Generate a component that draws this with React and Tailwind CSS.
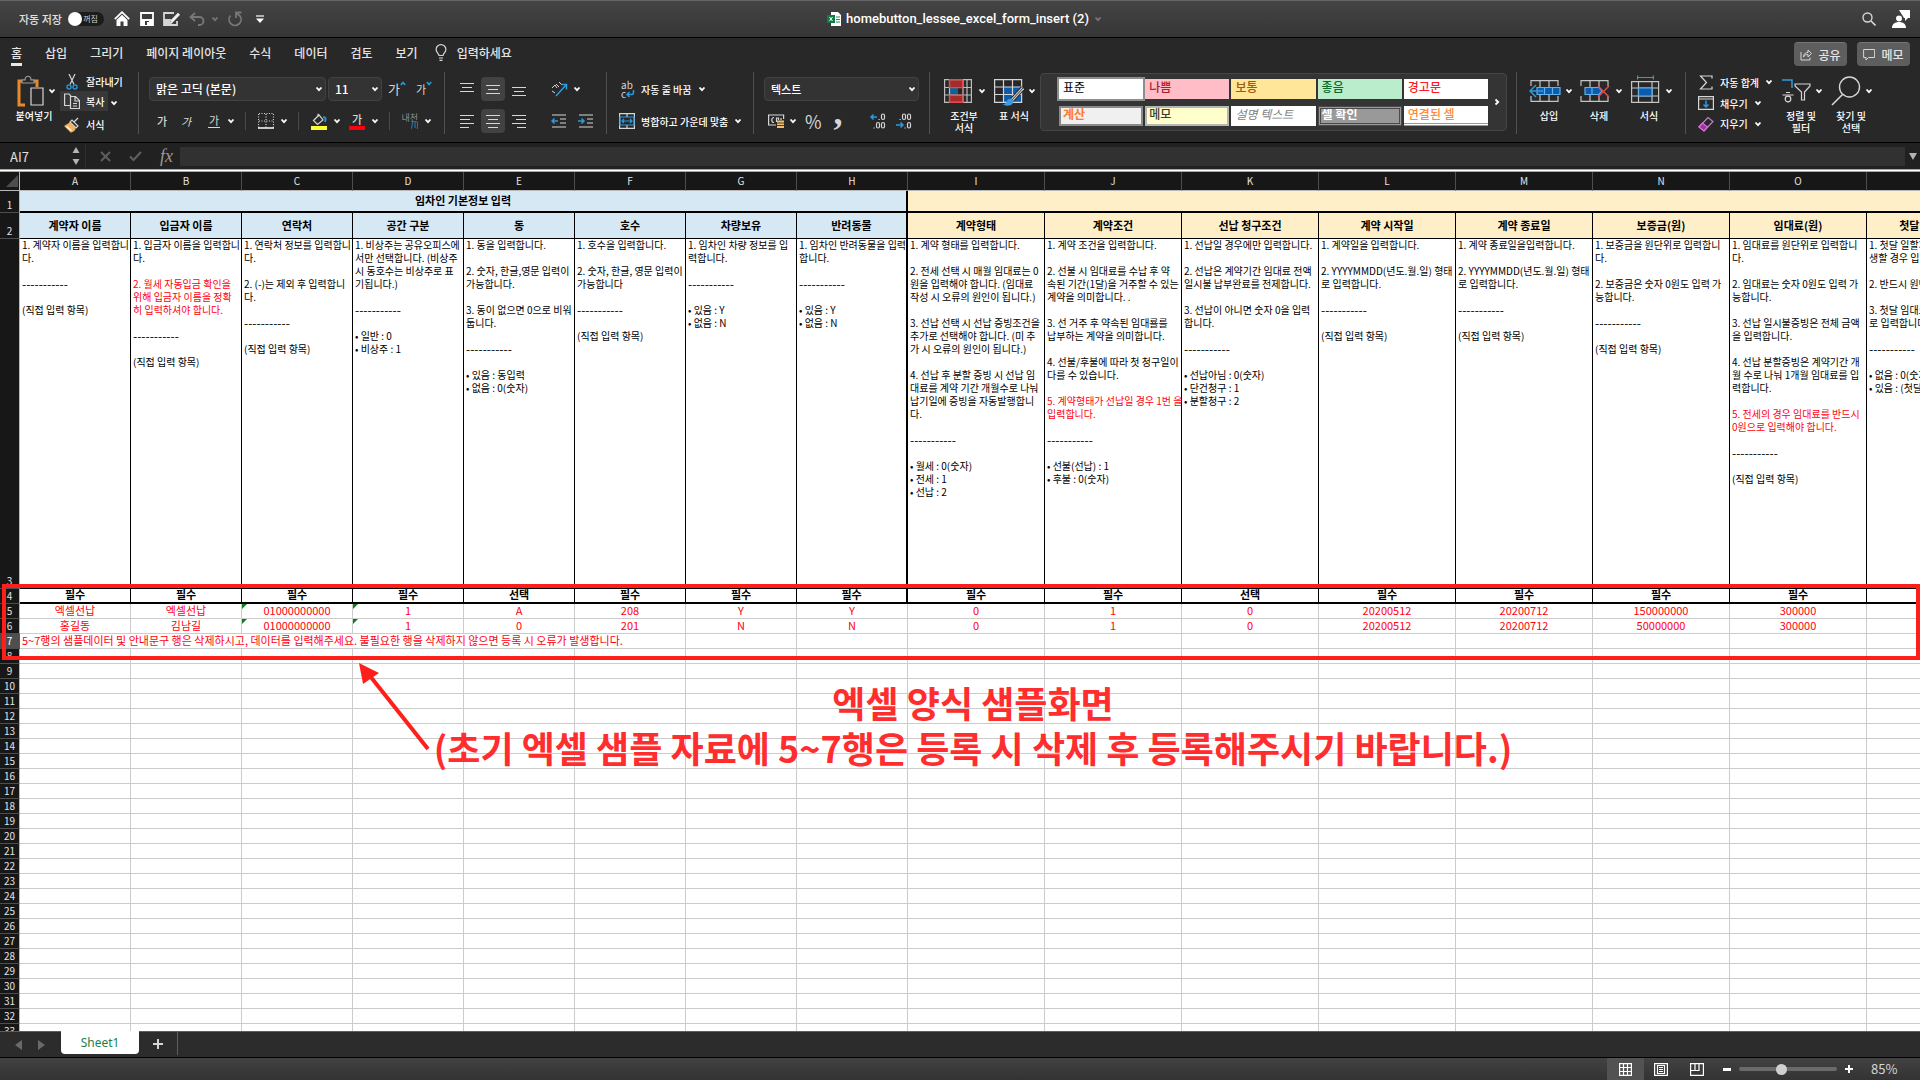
import React from "react";

const COLUMNS = [
  { id: "A", title: "계약자 이름", need: "필수", rows: ["엑셀선납", "홍길동"] },
  { id: "B", title: "입금자 이름", need: "필수", rows: ["엑셀선납", "김남길"] },
  { id: "C", title: "연락처", need: "필수", rows: ["01000000000", "01000000000"], flagged: true },
  { id: "D", title: "공간 구분", need: "필수", rows: ["1", "1"], flagged: true },
  { id: "E", title: "동", need: "선택", rows: ["A", "0"] },
  { id: "F", title: "호수", need: "필수", rows: ["208", "201"] },
  { id: "G", title: "차량보유", need: "필수", rows: ["Y", "N"] },
  { id: "H", title: "반려동물", need: "필수", rows: ["Y", "N"] },
  { id: "I", title: "계약형태", need: "필수", rows: ["0", "0"] },
  { id: "J", title: "계약조건", need: "필수", rows: ["1", "1"] },
  { id: "K", title: "선납 청구조건", need: "선택", rows: ["0", "0"] },
  { id: "L", title: "계약 시작일", need: "필수", rows: ["20200512", "20200512"] },
  { id: "M", title: "계약 종료일", need: "필수", rows: ["20200712", "20200712"] },
  { id: "N", title: "보증금(원)", need: "필수", rows: ["150000000", "50000000"] },
  { id: "O", title: "임대료(원)", need: "필수", rows: ["300000", "300000"] },
  { id: "P", title: "첫달 임대료(원)", need: "", rows: ["", ""] },
];

const DASH = "-----------";
const DIRECT = "(직접 입력 항목)";

// a leading "!" marks a red line
const GUIDES = {
  A: ["1. 계약자 이름을 입력합니", "다.", "", DASH, "", DIRECT],
  B: ["1. 입금자 이름을 입력합니", "다.", "", "!2. 월세 자동입금 확인을", "!위해 입금자 이름을 정확", "!히 입력하셔야 합니다.", "", DASH, "", DIRECT],
  C: ["1. 연락처 정보를 입력합니", "다.", "", "2. (-)는 제외 후 입력합니", "다.", "", DASH, "", DIRECT],
  D: ["1. 비상주는 공유오피스에", "서만 선택합니다. (비상주", "시 동호수는 비상주로 표", "기됩니다.)", "", DASH, "", "• 일반 : 0", "• 비상주 : 1"],
  E: ["1. 동을 입력합니다.", "", "2. 숫자, 한글,영문 입력이", "가능합니다.", "", "3. 동이 없으면 0으로 비워", "둡니다.", "", DASH, "", "• 있음 : 동입력", "• 없음 : 0(숫자)"],
  F: ["1. 호수을 입력합니다.", "", "2. 숫자, 한글, 영문 입력이", "가능합니다", "", DASH, "", DIRECT],
  G: ["1. 임차인 차량 정보를 입", "력합니다.", "", DASH, "", "• 있음 : Y", "• 없음 : N"],
  H: ["1. 임차인 반려동물을 입력", "합니다.", "", DASH, "", "• 있음 : Y", "• 없음 : N"],
  I: ["1. 계약 형태를 입력합니다.", "", "2. 전세 선택 시 매월 임대료는 0", "원을 입력해야 합니다. (임대료", "작성 시 오류의 원인이 됩니다.)", "", "3. 선납 선택 시 선납 증빙조건을", "추가로 선택해야 합니다. (미 추", "가 시 오류의 원인이 됩니다.)", "", "4. 선납 후 분할 증빙 시 선납 임", "대료를 계약 기간 개월수로 나눠", "납기일에 증빙을 자동발행합니", "다.", "", DASH, "", "• 월세 : 0(숫자)", "• 전세 : 1", "• 선납 : 2"],
  J: ["1. 계약 조건을 입력합니다.", "", "2. 선불 시 임대료를 수납 후 약", "속된 기간(1달)을 거주할 수 있는", "계약을 의미합니다. .", "", "3. 선 거주 후 약속된 임대룔를", "납부하는 계약을 의미합니다.", "", "4. 선불/후불에 따라 첫 청구일이", "다를 수 있습니다.", "", "!5. 계약형태가 선납일 경우 1번 을", "!입력합니다.", "", DASH, "", "• 선불(선납) : 1", "• 후불 : 0(숫자)"],
  K: ["1. 선납일 경우에만 입력합니다.", "", "2. 선납은 계약기간 임대료 전액", "일시불 납부완료를 전제합니다.", "", "3. 선납이 아니면 숫자 0을 입력", "합니다.", "", DASH, "", "• 선납아님 : 0(숫자)", "• 단건청구 : 1", "• 분할청구 : 2"],
  L: ["1. 계약일을 입력합니다.", "", "2. YYYYMMDD(년도.월.일) 형태", "로 입력합니다.", "", DASH, "", DIRECT],
  M: ["1. 계약 종료일을입력합니다.", "", "2. YYYYMMDD(년도.월.일) 형태", "로 입력합니다.", "", DASH, "", DIRECT],
  N: ["1. 보증금을 원단위로 입력합니", "다.", "", "2. 보증금은 숫자 0원도 입력 가", "능합니다.", "", DASH, "", DIRECT],
  O: ["1. 임대료를 원단위로 입력합니", "다.", "", "2. 임대료는 숫자 0원도 입력 가", "능합니다.", "", "3. 선납 일시불증빙은 전체 금액", "을 입력합니다.", "", "4. 선납 분할증빙은 계약기간 개", "월 수로 나눠 1개월 임대료를 입", "력합니다.", "", "!5. 전세의 경우 임대료를 반드시", "!0원으로 입력해야 합니다.", "", DASH, "", DIRECT],
  P: ["1. 첫달 일할계산이 발", "생할 경우 입력합니다.", "", "2. 반드시 원단위로", "", "3. 첫달 임대료는 숫자", "로 입력합니다.", "", DASH, "", "• 없음 : 0(숫자)", "• 있음 : (첫달 임대료)"],
};

const STYLES = [
  { label: "표준", cls: "bg-white text-black ring-2 ring-[#8a8f8c]" },
  { label: "나쁨", cls: "bg-[#ffbec7] text-[#b01c2c] font-medium" },
  { label: "보통", cls: "bg-[#ffe699] text-[#a35a0a] font-medium" },
  { label: "좋음", cls: "bg-[#b9edcb] text-[#0a6b28] font-medium" },
  { label: "경고문", cls: "bg-white text-[#ff1a2a] font-medium" },
  { label: "계산", cls: "bg-[#f0f0f0] text-[#ff7a26] font-bold outline-2 -outline-offset-2 outline-[#8a8a8a]" },
  { label: "메모", cls: "bg-[#ffffcc] text-[#3c3c2a] font-medium outline-2 -outline-offset-2 outline-[#b5b5b5]" },
  { label: "설명 텍스트", cls: "bg-white text-[#808080] italic" },
  { label: "셀 확인", cls: "bg-[#999999] text-white font-bold outline-3 -outline-offset-3 outline-double outline-[#4a4a4a]" },
  { label: "연결된 셀", cls: "bg-white text-[#ff8838] font-medium border-b-3 border-double border-[#ff7a26]" },
];

function Chevron({ className = "text-white" }) {
  return (
    <svg width="8" height="8" viewBox="0 0 8 8" fill="none" stroke="currentColor" strokeWidth="1.8" className={`shrink-0 ${className}`}>
      <path d="M1.5 2.5 4 5.2 6.5 2.5" />
    </svg>
  );
}

function Icon({ w = 16, h = 16, className = "", children }) {
  return (
    <svg width={w} height={h} viewBox={`0 0 ${w} ${h}`} fill="none" stroke="#d6d6d6" strokeWidth="1.2" className={`shrink-0 ${className}`}>
      {children}
    </svg>
  );
}

function Drop({ label }) {
  return (
    <button aria-label={label} className="flex w-3 h-6 items-center justify-center">
      <Chevron />
    </button>
  );
}

function Sep() {
  return <span className="w-px h-[18px] bg-[#4a4a4a]" />;
}

function Group({ className = "", children }) {
  return <div className={`h-[62px] shrink-0 border-r border-[#505050] ${className}`}>{children}</div>;
}

function Select({ label, value, className }) {
  return (
    <label className={`relative block ${className}`}>
      <select aria-label={label} className="appearance-none w-full h-6 pl-1.5 rounded-sm border border-[#424242] bg-[#333333] text-white font-medium">
        <option>{value}</option>
      </select>
      <span className="absolute right-[3px] top-2 pointer-events-none">
        <Chevron />
      </span>
    </label>
  );
}

function Lines({ d, boxed, label }) {
  return (
    <button aria-label={label} className={`flex w-6 h-6 items-center justify-center rounded-sm ${boxed ? "bg-[#424242]" : ""}`}>
      <Icon w={14} h={14}>
        <path d={d} />
      </Icon>
    </button>
  );
}

// big ribbon button: drawing + chevron, caption of one or two lines below
function BigButton({ icon, lines, className = "" }) {
  return (
    <button className={`flex flex-col items-start ${className}`}>
      <span className="flex h-[38px] items-center gap-1">
        {icon}
        <Chevron />
      </span>
      <span className="w-10 text-center text-[10px] leading-3 font-medium whitespace-nowrap flex flex-col items-center">
        {lines.map((l) => (
          <span key={l}>{l}</span>
        ))}
      </span>
    </button>
  );
}

function TitleBar() {
  return (
    <header className="flex h-[38px] shrink-0 items-center justify-between border-t border-t-[#666666] border-b border-b-black bg-linear-to-b from-[#444444] to-[#363636]">
      <div className="flex flex-1 items-center pl-[19px]">
        <label htmlFor="autosave" className="text-[11px] font-medium text-[#e0e0e0]">자동 저장</label>
        <span className="relative ml-1.5 flex h-3.5 w-9 items-center justify-end rounded-full bg-[#1c1c1c] pr-1.5 text-[8px] text-[#d0d0d0]">
          꺼짐
          <input id="autosave" type="checkbox" className="appearance-none absolute left-0 size-3.5 rounded-full bg-white" />
        </span>
        <button aria-label="홈으로" className="ml-2.5">
          <Icon w={16} h={16}>
            <path d="M0.8 8.2 8 1.2l7.2 7" stroke="#fff" strokeWidth="1.8" />
            <path d="M2.5 9 8 3.8 13.5 9v6h-4v-4.500h-3V15h-4z" fill="#fff" stroke="none" />
          </Icon>
        </button>
        <button aria-label="저장" className="ml-2.5">
          <Icon w={14} h={14}>
            <path d="M1 1h12v12H1z" stroke="#fff" strokeWidth="1.8" />
            <path d="M1 7h12v6H1z" fill="#fff" stroke="none" />
            <path d="M5 9h4v4H5z" fill="#3c3c3c" stroke="none" />
            <path d="M7 10h2v3H7z" fill="#fff" stroke="none" />
          </Icon>
        </button>
        <button aria-label="다른 이름으로 저장" className="ml-[9px]">
          <Icon w={18} h={14}>
            <path d="M11 1H1v12h13V9" strokeWidth="1.8" />
            <path d="M1 7h7l-1 6H1z" fill="#d6d6d6" stroke="none" />
            <path d="M8.500 9.500 16 1.800" strokeWidth="3" stroke="#f2f2f2" />
            <path d="M7 12l.8-3 2.200 2.100z" fill="#fff" stroke="none" />
          </Icon>
        </button>
        <button aria-label="실행 취소" className="ml-2 flex items-center gap-1.5 text-[#777777]">
          <Icon w={16} h={14}>
            <path d="M6 1 1.500 5 6 9M2 5h8.500a4 4 0 0 1 0 8H9" stroke="#777" strokeWidth="1.8" />
          </Icon>
          <Chevron className="text-[#777777]" />
        </button>
        <button aria-label="다시 실행" className="ml-2">
          <Icon w={16} h={16}>
            <path d="M3.500 4.500a6 6 0 1 0 9.500.5L9.500 2M9 7V1.500h5.500" stroke="#777" strokeWidth="1.8" />
          </Icon>
        </button>
        <button aria-label="도구 모음 사용자 지정" className="ml-[13px]">
          <Icon w={8} h={8}>
            <path d="M0 1h8" stroke="#fff" />
            <path d="M0 3.500h8L4 8z" fill="#fff" stroke="none" />
          </Icon>
        </button>
      </div>
      <div className="flex items-center">
        <Icon w={14} h={14}>
          <path d="M4 0h7l3 3v11H4z" fill="#fff" stroke="none" />
          <path d="M9 5h4M9 7.500h4M9 10h4" stroke="#1f8f55" />
          <path d="M0 3h8v8H0z" fill="#107c41" stroke="none" />
          <path d="M2.500 5 5.500 9M5.500 5 2.500 9" stroke="#fff" strokeWidth="1" />
        </Icon>
        <h1 className="mx-[5px] font-['Roboto','Noto_Sans_CJK_KR',sans-serif] text-[13px] font-medium text-white">
          homebutton_lessee_excel_form_insert (2)
        </h1>
        <Chevron className="text-[#777777]" />
      </div>
      <div className="flex flex-1 items-center justify-end gap-4 pr-2.5">
        <button aria-label="검색">
          <Icon w={14} h={14}>
            <circle cx="5.500" cy="5.500" r="4.500" strokeWidth="1.400" />
            <path d="M9 9l4.500 4.500" strokeWidth="1.600" />
          </Icon>
        </button>
        <button aria-label="계정">
          <Icon w={18} h={18}>
            <path d="M7 0h11v8h-2l-3 3V8h-1z" fill="#fff" stroke="none" />
            <circle cx="7" cy="8.500" r="3.600" fill="#fff" stroke="#3c3c3c" />
            <path d="M0 18c0-4 3-6 7-6s7 2 7 6z" fill="#fff" stroke="none" />
          </Icon>
        </button>
      </div>
    </header>
  );
}

function Tabs() {
  const tabs = ["홈", "삽입", "그리기", "페이지 레이아웃", "수식", "데이터", "검토", "보기"];
  return (
    <nav className="flex h-[34px] items-start justify-between pl-[11px] pr-2.5 pt-1 text-xs font-medium text-[#e4e4e4]">
      <div className="flex items-start gap-[23px]">
        {tabs.map((t, i) => (
          <button key={t} className={`h-6 leading-[20px] ${i === 0 ? "border-b-[3px] border-[#e8e8e8]" : "border-b-[3px] border-transparent"}`}>
            {t}
          </button>
        ))}
        <button className="-ml-1.5 flex h-[21px] items-center gap-2.5 leading-[20px]">
          <Icon w={12} h={17}>
            <path d="M4 11.500c0-2-2.900-3-2.900-6a4.900 4.900 0 0 1 9.800 0c0 3-2.900 4-2.900 6zM4 14h4M4.500 16.400h3" />
          </Icon>
          입력하세요
        </button>
      </div>
      <div className="flex gap-2.5">
        <button className="flex h-6 w-[53px] items-center justify-center gap-1.5 rounded-sm border-t border-[#757575] bg-[#5e5e5e]">
          <Icon w={12} h={13}>
            <path d="M1 4v8h9V9.500M3.500 9c0-3 2-4.500 4.500-4.500V2l3.500 3.500L8 9V6.500C6 6.500 4.500 7 3.500 9z" strokeWidth="1" />
          </Icon>
          공유
        </button>
        <button className="flex h-6 w-[53px] items-center justify-center gap-1.5 rounded-sm border-t border-[#757575] bg-[#5e5e5e]">
          <Icon w={12} h={13}>
            <path d="M.6 1.500h11v8H5.500L3 12V9.500H.6z" strokeWidth="1" />
          </Icon>
          메모
        </button>
      </div>
    </nav>
  );
}

function ClipboardGroup() {
  return (
    <Group className="flex w-[139px] pl-[14px] text-[10px] font-medium">
      <BigButton
        lines={["붙여넣기"]}
        icon={
          <Icon w={30} h={32}>
            <path d="M11 30H5V6h18v6" stroke="#e8892b" strokeWidth="3" />
            <path d="M8 8V5h3c0-5 6-5 6 0h3v3z" fill="#282828" stroke="#9a9a9a" />
            <path d="M17 13h12v17H17z" fill="#282828" />
          </Icon>
        }
      />
      <div className="flex flex-col pl-1">
        <button className="flex h-[22px] items-center gap-2 pl-1.5">
          <Icon w={12} h={16}>
            <path d="M3 0 8 10.500M9 0 4 10.500" />
            <circle cx="3" cy="13" r="2" stroke="#2b8fd0" strokeWidth="1.500" />
            <circle cx="9" cy="13" r="2" stroke="#2b8fd0" strokeWidth="1.500" />
          </Icon>
          잘라내기
        </button>
        <div className="flex">
          <button className="flex h-5 items-center gap-1.5 bg-[#383838] px-1">
            <Icon w={16} h={16}>
              <path d="M6 12.500H.6V1H5l2 2M6.500 3.500h5l4 4v8h-9zM11 4v4h4M9 10.500h4M9 13h4" />
            </Icon>
            복사
          </button>
          <Drop label="복사 옵션" />
        </div>
        <button className="flex h-[22px] items-center gap-1.5 pl-1">
          <Icon w={16} h={16}>
            <path d="M10 5l4-4M6 5l6 6 2-2-6-6z" />
            <path d="M6 6 1 9l6 6c3-1 4-3 4-4z" fill="#efb35c" stroke="#efb35c" />
            <path d="M2.500 9.500l5 4" stroke="#fff" />
          </Icon>
          서식
        </button>
      </div>
    </Group>
  );
}

function FontGroup() {
  return (
    <Group className="flex w-[306px] flex-col gap-2 pl-[10px] pt-[5px]">
      <div className="flex items-center text-xs">
        <Select label="글꼴" value="맑은 고딕 (본문)" className="w-[177px]" />
        <Select label="글꼴 크기" value="11" className="ml-0.5 w-[54px]" />
        <button aria-label="글꼴 크게" className="ml-1.5 flex items-start text-[13px] leading-4 text-[#d6d6d6]">
          가
          <Icon w={6} h={5}><path d="M.8 4 3 1.500 5.200 4" stroke="#2b9be0" strokeWidth="1.500" /></Icon>
        </button>
        <button aria-label="글꼴 작게" className="ml-2.5 flex items-start text-[11px] leading-4 text-[#d6d6d6]">
          가
          <Icon w={6} h={5}><path d="M.8 1 3 3.500 5.200 1" stroke="#2b9be0" strokeWidth="1.500" /></Icon>
        </button>
      </div>
      <div className="flex h-6 items-center pl-[7px] text-[11px] text-[#d6d6d6]">
        <button className="font-medium w-3">가</button>
        <button className="ml-3 w-3 italic">가</button>
        <button className="ml-4 w-3 border-b border-[#d6d6d6] leading-[13px]">가</button>
        <span className="ml-[5px] mr-2"><Drop label="밑줄 옵션" /></span>
        <Sep />
        <button aria-label="테두리" className="ml-3">
          <Icon w={16} h={16}>
            <path d="M1 .5h14M1 8h14M.5 1v14M15.500 1v14M8 1v14" strokeDasharray="1 1.500" />
            <path d="M0 15h16" strokeWidth="1.500" stroke="#fff" />
          </Icon>
        </button>
        <span className="ml-1 mr-2"><Drop label="테두리 옵션" /></span>
        <Sep />
        <button aria-label="채우기 색" className="ml-3">
          <Icon w={16} h={17}>
            <path d="M2.500 7.500 8 2l4 5-5.500 4.500zM7 4V.8" />
            <path d="M12 4c3 0 3 2 2 5" stroke="#2b8fd0" strokeWidth="2" />
            <path d="M0 13h16v4H0z" fill="#ffff33" stroke="none" />
          </Icon>
        </button>
        <span className="ml-1"><Drop label="채우기 색 옵션" /></span>
        <button aria-label="글꼴 색" className="ml-1.5 w-4 border-b-4 border-[#ff0010] text-center font-medium leading-[13px]">가</button>
        <span className="ml-1 mr-2"><Drop label="글꼴 색 옵션" /></span>
        <Sep />
        <button aria-label="윗주" className="ml-3 flex w-4 flex-col items-end text-[9px] leading-[9px] text-[#8c8c8c]">
          <span className="whitespace-nowrap">내천</span>
          <Icon w={7} h={7}><path d="M1.500 0c0 4 0 5-1.500 7M4 0v6M6.500 0v7" stroke="#2b6f9c" /></Icon>
        </button>
        <span className="ml-1"><Drop label="윗주 옵션" /></span>
      </div>
    </Group>
  );
}

function AlignGroup() {
  return (
    <Group className="flex w-[162px] flex-col gap-2 pl-[10px] pt-[5px]">
      <div className="flex items-center gap-0.5">
        <Lines label="위쪽 맞춤" d="M0 1.500h14M2 5.500h10M0 9.500h14" />
        <Lines label="가운데 맞춤(세로)" boxed d="M0 3.500h14M2 7.500h10M0 11.500h14" />
        <Lines label="아래쪽 맞춤" d="M0 5.500h14M2 9.500h10M0 13.500h14" />
        <span className="ml-1.5 mr-2.5"><Sep /></span>
        <button aria-label="방향">
          <Icon w={18} h={18}>
            <path d="M1 8l3-3 2 3M5 4l3 3M8 2l3 3M1 11l3 2" strokeWidth="1" />
            <path d="M5 16 15 5M10.500 4.500H15.500V9.500" stroke="#2b9be0" strokeWidth="1.500" />
          </Icon>
        </button>
        <Drop label="방향 옵션" />
      </div>
      <div className="flex items-center gap-0.5">
        <Lines label="왼쪽 맞춤" d="M0 1.500h14M0 5.500h10M0 9.500h14M0 13.500h9" />
        <Lines label="가운데 맞춤" boxed d="M0 1.500h14M2 5.500h10M0 9.500h14M2 13.500h10" />
        <Lines label="오른쪽 맞춤" d="M0 1.500h14M4 5.500h10M0 9.500h14M5 13.500h9" />
        <span className="ml-1.5 mr-2.5"><Sep /></span>
        <button aria-label="내어쓰기">
          <Icon w={15} h={14}>
            <path d="M1 1h14M9 5h6M9 9h6M1 13h14" />
            <path d="M7 7H1M3.500 4.500 1 7l2.500 2.500" stroke="#2b9be0" strokeWidth="1.500" />
          </Icon>
        </button>
        <button aria-label="들여쓰기" className="ml-2.5">
          <Icon w={15} h={14}>
            <path d="M1 1h14M9 5h6M9 9h6M1 13h14" />
            <path d="M0 7h6M3.500 4.500 6 7 3.500 9.500" stroke="#2b9be0" strokeWidth="1.500" />
          </Icon>
        </button>
      </div>
    </Group>
  );
}

function WrapGroup() {
  return (
    <Group className="flex w-[147px] flex-col gap-2 pl-3 pt-[5px] text-[10px] font-medium">
      <button className="flex h-6 items-center gap-1.5">
        <span className="flex w-4 flex-col pl-0.5 text-[10px] leading-[9px] font-normal text-[#d6d6d6]">
          <span className="text-left">ab</span>
          <span className="flex items-center">
            c
            <Icon w={9} h={8}><path d="M7.500 0v2.500c0 1.500-1 2-2 2H1M3.500 2 1 4.500 3.500 7" stroke="#2b9be0" strokeWidth="1.500" /></Icon>
          </span>
        </span>
        자동 줄 바꿈
        <Chevron />
      </button>
      <button className="flex h-6 items-center gap-1.5">
        <Icon w={16} h={16}>
          <path d="M.6.6h14.800v14.800H.6zM8 0v4M8 12v4" />
          <path d="M1 4h14v8H1zM3 8h10M5 6 3 8l2 2M11 6l2 2-2 2" stroke="#2b9be0" />
        </Icon>
        병합하고 가운데 맞춤
        <Chevron />
      </button>
    </Group>
  );
}

function NumberGroup() {
  return (
    <Group className="flex w-[176px] flex-col gap-2 pl-[10px] pt-[5px]">
      <Select label="표시 형식" value="텍스트" className="w-[155px] text-[11px]" />
      <div className="flex h-6 items-center pl-1 text-[#d6d6d6]">
        <button aria-label="회계 표시 형식">
          <Icon w={17} h={14}>
            <path d="M8 11H.6V1h15v4M6 3.500c-3 0-3 5 0 5M8.500 8V4h2v2M13 4v2" />
            <path d="M9 6.500h7V14H9z" fill="#f0c074" stroke="none" />
            <path d="M9 9h7M9 11.500h7" stroke="#5a3c10" />
          </Icon>
        </button>
        <span className="ml-0.5"><Drop label="회계 표시 형식 옵션" /></span>
        <button className="ml-1.5 text-lg leading-6">%</button>
        <button className="ml-3 flex h-6 w-3 items-start font-['Liberation_Serif',serif] text-4xl font-bold leading-[6px]">,</button>
        <span className="ml-3 mr-3"><Sep /></span>
        <button aria-label="자릿수 늘림">
          <Icon w={16} h={16}>
            <path d="M7 4H1M3.500 1.500 1 4l2.500 2.500" stroke="#2b9be0" strokeWidth="1.500" />
            <rect x="11.500" y="1" width="3" height="5.500" rx="1.500" />
            <rect x="6.500" y="9.500" width="3" height="5.500" rx="1.500" />
            <rect x="11.500" y="9.500" width="3" height="5.500" rx="1.500" />
            <path d="M8.500 6.500h1.200M3.500 15h1.200" />
          </Icon>
        </button>
        <button aria-label="자릿수 줄임" className="ml-2.5">
          <Icon w={16} h={16}>
            <path d="M0 12h7M4.500 9.500 7 12l-2.500 2.500" stroke="#2b9be0" strokeWidth="1.500" />
            <rect x="6.500" y="1" width="3" height="5.500" rx="1.500" />
            <rect x="11.500" y="1" width="3" height="5.500" rx="1.500" />
            <rect x="11.500" y="9.500" width="3" height="5.500" rx="1.500" />
            <path d="M3.500 6.500h1.200M8.500 15h1.200" />
          </Icon>
        </button>
      </div>
    </Group>
  );
}

function StylesGroup() {
  return (
    <Group className="flex flex-1 pl-[14px] pr-[9px]">
      <BigButton
        className="w-[50px]"
        lines={["조건부", "서식"]}
        icon={
          <Icon w={30} h={26}>
            <path d="M5 2h13v8H5zM5 17h14v7H5z" fill="#a52a2a" stroke="none" />
            <path d="M5 10h9v7H5z" fill="#0d639c" stroke="none" />
            <path d="M.6 1.600h26.800v22.800H.6zM.6 9.500h26.800M.6 17h26.800M5.500 1.600v22.800M19 1.600v22.800M23 1.600v22.800" stroke="#bdbdbd" />
            <path d="M5.500 1.600h13v8h-13zM5.500 17h13.500v7.500H5.500z" stroke="#e04a4a" />
          </Icon>
        }
      />
      <BigButton
        lines={["표 서식"]}
        icon={
          <Icon w={30} h={30}>
            <path d="M9 11h19v15H9z" fill="#0b5cad" stroke="none" />
            <path d="M.6 3.600h27v22.800H.6zM.6 11h27M.6 18.500h27M9.500 3.600v22.800M18.500 3.600v22.800" />
            <path d="M29 12 18 24" stroke="#282828" strokeWidth="5" />
            <path d="M29 12 18 24" stroke="#c8c8c8" strokeWidth="3" />
            <path d="M29 12 18 24" stroke="#444" strokeWidth="1" />
            <path d="M18 23c-4-1-5 1-5.500 3-.5 1.500-2 2-4 2 4 3 10 2 11-2z" fill="#3a9be0" stroke="none" />
          </Icon>
        }
      />
      <div className="ml-1 mt-px flex h-[58px] flex-1 items-center rounded-sm border border-[#454545] bg-[#343434] pl-[18px]">
        <div className="grid flex-1 grid-cols-5 gap-x-0.5 gap-y-[7px]">
          {STYLES.map((s) => (
            <button key={s.label} className={`flex h-5 items-start overflow-hidden whitespace-nowrap text-left text-xs leading-4 ${s.cls}`}>
              <span className="px-1">{s.label}</span>
            </button>
          ))}
        </div>
        <button aria-label="스타일 더 보기" className="flex w-[18px] justify-center">
          <Chevron className="-rotate-90 text-white" />
        </button>
      </div>
    </Group>
  );
}

function CellsGroup() {
  return (
    <Group className="flex w-[169px] gap-0.5 pl-3">
      <BigButton
        className="w-12"
        lines={["삽입"]}
        icon={
          <Icon w={32} h={24}>
            <path d="M2 7V1.600h27V7M2 17v5.400h27V17M11 1.600v20.800M20 1.600v20.800" stroke="#c4c4c4" />
            <path d="M8 8.500h23v7H8z" fill="#0b5cad" stroke="#63b0ea" />
            <path d="M15.500 8.500v7M23.500 8.500v7" stroke="#63b0ea" />
            <path d="M14 12H1M7 6l-6 6 6 6" stroke="#2b9be0" strokeWidth="1.500" />
          </Icon>
        }
      />
      <BigButton
        className="w-12"
        lines={["삭제"]}
        icon={
          <Icon w={32} h={24}>
            <path d="M2 7V1.600h27V7M2 17v5.400h27V17M11 1.600V8M20 1.600V8M11 16v6.400M20 16v6.400" stroke="#c4c4c4" />
            <path d="M6 8.500h14l3 3.500-3 3.500H6z" fill="#0b5cad" stroke="#63b0ea" />
            <path d="M13 8.500v7" stroke="#63b0ea" />
            <path d="M19 7l11 11M30 7 19 18" stroke="#e04a4a" strokeWidth="1.500" />
          </Icon>
        }
      />
      <BigButton
        className="w-12"
        lines={["서식"]}
        icon={
          <Icon w={32} h={36}>
            <path d="M2.600 8.600h27v20.800h-27zM2.600 15h27M2.600 23h27M9.500 8.600v20.800M23 8.600v20.800" stroke="#c4c4c4" />
            <path d="M9.500 15H23v8H9.500z" fill="#0b5cad" stroke="#63b0ea" />
            <path d="M9 4.500h15M8.600 2.500v4M24.400 2.500v4" stroke="#2b9be0" />
          </Icon>
        }
      />
    </Group>
  );
}

function EditGroup() {
  return (
    <div className="flex h-[62px] w-[234px] shrink-0 pl-3 text-[10px] font-medium">
      <div className="flex w-[79px] flex-col">
        <button className="flex h-[22px] items-center gap-1.5 whitespace-nowrap">
          <Icon w={16} h={15}><path d="M14 3.500V1H2.500L8.500 7.500 2.500 14H14v-2.500" /></Icon>
          자동 합계
          <Chevron />
        </button>
        <button className="flex h-[22px] items-center gap-1.5">
          <Icon w={16} h={14}>
            <path d="M.6.6h14.800v12.800H.6zM.6 3h14.800" />
            <path d="M8 4.500V11M5.500 8.500 8 11l2.500-2.500" stroke="#2b9be0" strokeWidth="1.500" />
          </Icon>
          채우기
          <Chevron />
        </button>
        <button className="flex h-[22px] items-center gap-1.5">
          <Icon w={16} h={16}>
            <path d="M1 11 10 1.500l5 4L6 15z" stroke="#c77bcb" />
            <path d="M1 11l3.500-4 5 4L6 15z" fill="#a62fab" stroke="#c77bcb" />
          </Icon>
          지우기
          <Chevron />
        </button>
      </div>
      <BigButton
        className="ml-1 w-12"
        lines={["정렬 및", "필터"]}
        icon={
          <Icon w={30} h={24}>
            <path d="M1 1h10v8" stroke="#2b9be0" strokeWidth="1.500" />
            <path d="M5 13.500h4M1.500 16h11" />
            <circle cx="7" cy="20" r="2.800" />
            <path d="M14 5h15v2l-5.500 6v8h-3v-8L14 7z" />
          </Icon>
        }
      />
      <BigButton
        className="ml-0.5"
        lines={["찾기 및", "선택"]}
        icon={
          <Icon w={30} h={30}>
            <circle cx="18.500" cy="11" r="10" strokeWidth="1.400" />
            <path d="M11.500 18.500 1 29" strokeWidth="1.600" />
          </Icon>
        }
      />
    </div>
  );
}

function FormulaBar() {
  return (
    <div className="flex h-[26px] shrink-0 items-center bg-[#212121]">
      <input aria-label="이름 상자" defaultValue="AI7" className="h-6 w-[70px] bg-transparent pl-2.5 text-[13px] text-[#e0e0e0]" />
      <button aria-label="이름 목록" className="flex h-6 w-4 items-center border-r border-[#2e2e2e]">
        <svg width="8" height="20" viewBox="0 0 8 20" fill="#b5b5b5" className="ml-0.5">
          <path d="M.5 7 4 1l3.500 6zM.5 13 4 19l3.500-6z" />
        </svg>
      </button>
      <div className="flex flex-1 items-center">
        <button aria-label="취소" className="ml-[14px]">
          <Icon w={11} h={11}><path d="M1 1l9 9M10 1l-9 9" stroke="#5e5e5e" strokeWidth="2" /></Icon>
        </button>
        <button aria-label="입력" className="ml-[18px]">
          <Icon w={13} h={11}><path d="M1 5.500 4.500 9 12 1" stroke="#5e5e5e" strokeWidth="2.200" /></Icon>
        </button>
        <button aria-label="함수 삽입" className="ml-[18px] w-5 text-left font-['Liberation_Serif',serif] text-lg leading-5 italic text-[#9a9a9a]">fx</button>
        <input aria-label="수식" className="h-[19px] flex-1 bg-[#313131]" />
        <button aria-label="수식 입력줄 확장" className="flex w-[15px] justify-center">
          <svg width="8" height="7" viewBox="0 0 8 7" fill="#b5b5b5"><path d="M0 0h8L4 7z" /></svg>
        </button>
      </div>
    </div>
  );
}

function RowHead({ n, className = "" }) {
  return (
    <th className={`border-r border-b border-b-[#4d4d4d] p-0 pb-px align-bottom text-[10px] leading-[13px] font-normal ${className || "border-r-[#b8b8b8] bg-[#171717] text-[#e4e4e4]"}`}>
      {n}
    </th>
  );
}

function edge(id) {
  return id === "H" ? "border-r-2 border-r-black" : "border-r border-r-black";
}

function Sheet() {
  const blank = Array.from({ length: 26 }, (_, i) => i + 8);
  return (
    <table className="w-[2004px] table-fixed border-separate border-spacing-0 bg-white text-[11px] leading-[13px] text-black">
      <colgroup>
        <col className="w-5" />
        {COLUMNS.map((c, i) => (
          <col key={c.id} className={i < 8 ? "w-[111px]" : "w-[137px]"} />
        ))}
      </colgroup>
      <thead>
        <tr className="h-[19px] bg-[#171717] text-[10px] text-[#e4e4e4]">
          <th className="border-r border-b border-[#b8b8b8] p-0">
            <svg width="12" height="12" viewBox="0 0 12 12" className="ml-1.5"><path d="M12 0v12H0z" fill="#4d4d4d" /></svg>
          </th>
          {COLUMNS.map((c) => (
            <th key={c.id} className="border-r border-b border-r-[#4d4d4d] border-b-[#b8b8b8] p-0 pb-0.5 font-normal">{c.id}</th>
          ))}
        </tr>
      </thead>
      <tbody>
        <tr className="h-[22px]">
          <RowHead n={1} />
          <th colSpan={8} className="border-r-2 border-b-2 border-black bg-[#d6e8f4] p-0 pb-px font-bold">임차인 기본정보 입력</th>
          <th colSpan={8} className="border-b-2 border-black bg-[#ffefc9] p-0" />
        </tr>
        <tr className="h-[26px]">
          <RowHead n={2} />
          {COLUMNS.map((c, i) => (
            <th key={c.id} className={`border-b border-b-black p-0 pb-px font-bold ${edge(c.id)} ${i < 8 ? "bg-[#d6e8f4]" : "bg-[#ffefc9]"}`}>{c.title}</th>
          ))}
        </tr>
        <tr className="h-[350px]">
          <RowHead n={3} />
          {COLUMNS.map((c) => (
            <td key={c.id} className={`border-b border-b-black p-0 pl-0.5 align-top text-[10px] whitespace-nowrap ${edge(c.id)}`}>
              {GUIDES[c.id].map((line, i) => (
                <p key={i} className={`h-[13px] leading-[11px] ${line === DASH ? "text-xs leading-[11px]" : ""} ${line[0] === "!" ? "text-[#ff0010]" : ""}`}>
                  {line.replace("!", "")}
                </p>
              ))}
            </td>
          ))}
        </tr>
        <tr className="h-[15px]">
          <RowHead n={4} />
          {COLUMNS.map((c) => (
            <th key={c.id} className={`border-b-2 border-b-black p-0 align-top leading-[11px] font-bold ${edge(c.id)}`}>{c.need}</th>
          ))}
        </tr>
        {[0, 1].map((r) => (
          <tr key={r} className="h-[15px] text-center text-[#ff0010]">
            <RowHead n={5 + r} />
            {COLUMNS.map((c) => (
              <td key={c.id} className="relative border-r border-b border-[#cccccc] p-0 pb-px">
                {c.flagged && (
                  <svg width="5" height="5" viewBox="0 0 5 5" className="absolute top-0 left-0"><path d="M0 0h5L0 5z" fill="#107c20" /></svg>
                )}
                {c.rows[r]}
              </td>
            ))}
          </tr>
        ))}
        <tr className="h-[15px]">
          <RowHead n={7} className="border-r-[#107c41] bg-[#4f4f4f] text-white" />
          <td colSpan={6} className="border-r border-b border-[#cccccc] p-0 pb-px pl-0.5 whitespace-nowrap text-[#ff0010]">
            5~7행의 샘플데이터 및 안내문구 행은 삭제하시고, 데이터를 입력해주세요. 불필요한 행을 삭제하지 않으면 등록 시 오류가 발생합니다.
          </td>
          {COLUMNS.slice(6).map((c) => (
            <td key={c.id} className="border-r border-b border-[#cccccc] p-0" />
          ))}
        </tr>
        {blank.map((n) => (
          <tr key={n} className="h-[15px]">
            <RowHead n={n} />
            {COLUMNS.map((c) => (
              <td key={c.id} className="border-r border-b border-[#cccccc] p-0" />
            ))}
          </tr>
        ))}
      </tbody>
    </table>
  );
}

function Annotations() {
  return (
    <>
      <div className="absolute top-[412px] right-0 left-0.5 h-[76px] border-4 border-[#ff1f1a]" />
      <svg width="76" height="92" viewBox="0 0 76 92" className="absolute top-[490px] left-[356px]">
        <path d="M14 14 72 87" stroke="#ff1f1a" strokeWidth="4" />
        <path d="M3 1l20 10L7 22z" fill="#ff1f1a" />
      </svg>
      <p className="absolute top-[508px] left-[433px] w-[1080px] text-center text-[36px] leading-[45px] font-bold whitespace-nowrap text-[#ff2d2d]">
        엑셀 양식 샘플화면
        <br />
        (초기 엑셀 샘플 자료에 5~7행은 등록 시 삭제 후 등록해주시기 바랍니다.)
      </p>
    </>
  );
}

function SheetTabs() {
  return (
    <div className="flex h-[26px] shrink-0 items-start border-t border-[#5e5e5e] bg-[#2c2c2c]">
      <div className="flex h-[26px] w-[61px] items-center gap-4 pl-[15px]">
        <button aria-label="이전 시트"><svg width="7" height="10" viewBox="0 0 7 10" fill="#6a6a6a"><path d="M7 0v10L0 5z" /></svg></button>
        <button aria-label="다음 시트"><svg width="7" height="10" viewBox="0 0 7 10" fill="#6a6a6a"><path d="M0 0v10l7-5z" /></svg></button>
      </div>
      <button className="-mt-px h-[23px] w-[78px] rounded-b-sm bg-white font-['Noto_Sans',sans-serif] text-xs text-[#1d7f4e]">Sheet1</button>
      <button aria-label="새 시트" className="flex h-[23px] w-[39px] items-center justify-center border-r border-[#5e5e5e]">
        <Icon w={10} h={10}><path d="M5 0v10M0 5h10" strokeWidth="2" /></Icon>
      </button>
    </div>
  );
}

function StatusBar() {
  return (
    <footer className="flex h-[23px] shrink-0 items-center justify-end border-t border-black bg-linear-to-b from-[#424242] to-[#333333] text-[#d6d6d6]">
      <button aria-label="기본 보기" className="flex h-full w-[37px] items-center justify-center bg-[#525252]">
        <Icon w={13} h={13}><path d="M.6.6h11.800v11.800H.6zM4.500.6v12M8.500.6v12M.6 4.500h12M.6 8.500h12" stroke="#fff" /></Icon>
      </button>
      <button aria-label="페이지 레이아웃 보기" className="ml-2.5">
        <Icon w={14} h={13}><path d="M.6.6h12.800v11.800H.6zM3.500 2.500h7v8h-7zM5 4.500h4M5 6.500h4M5 8.500h4" stroke="#fff" /></Icon>
      </button>
      <button aria-label="페이지 나누기 미리 보기" className="ml-[22px]">
        <Icon w={14} h={13}><path d="M.6.6h12.800v11.800H.6zM.6 7.500H9V.6M5 .6v7" stroke="#fff" /></Icon>
      </button>
      <button aria-label="축소" className="ml-[19px] h-[3px] w-2 bg-white" />
      <input
        type="range"
        aria-label="확대/축소"
        min="0"
        max="100"
        defaultValue="42"
        className="mx-2 h-1 w-[98px] appearance-none rounded-full bg-[#6a6a6a] [&::-webkit-slider-thumb]:size-[11px] [&::-webkit-slider-thumb]:appearance-none [&::-webkit-slider-thumb]:rounded-full [&::-webkit-slider-thumb]:bg-[#cfcfcf]"
      />
      <button aria-label="확대">
        <Icon w={8} h={8}><path d="M4 0v8M0 4h8" stroke="#fff" strokeWidth="2" /></Icon>
      </button>
      <span className="ml-[18px] w-[49px] text-[13px] leading-4">85%</span>
    </footer>
  );
}

export default function App() {
  return (
    <div className="flex h-screen flex-col overflow-hidden bg-[#282828] font-['Noto_Sans_CJK_KR','Noto_Sans',sans-serif] text-white">
      <TitleBar />
      <section className="shrink-0 border-b border-black bg-[#282828] pb-2">
        <Tabs />
        <div className="flex">
          <ClipboardGroup />
          <FontGroup />
          <AlignGroup />
          <WrapGroup />
          <NumberGroup />
          <StylesGroup />
          <CellsGroup />
          <EditGroup />
        </div>
      </section>
      <FormulaBar />
      <div className="h-[3px] shrink-0 border-y border-[#a8a8a8] bg-white" />
      <main className="relative flex-1 overflow-hidden bg-white">
        <Sheet />
        <Annotations />
      </main>
      <SheetTabs />
      <StatusBar />
    </div>
  );
}
